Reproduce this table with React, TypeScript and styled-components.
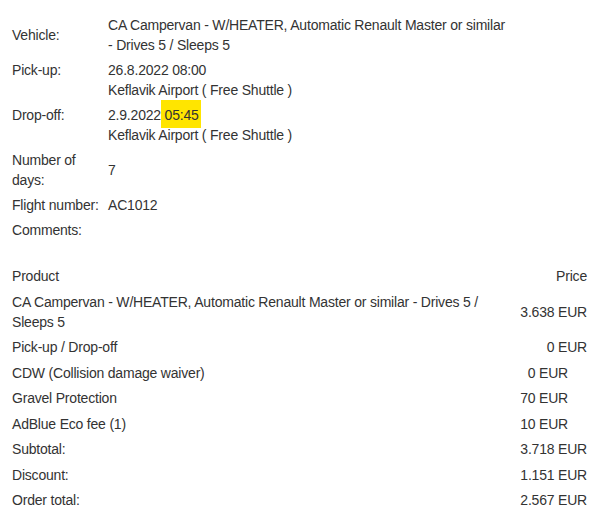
import React from "react";
import styled, { createGlobalStyle } from "styled-components";

const Global = createGlobalStyle`
  html, body { margin: 0; padding: 0; background: #fff; }
  body {
    font-family: Arial, "Liberation Sans", Helvetica, sans-serif;
    font-size: 14px;
    line-height: 20px;
    color: #333;
    letter-spacing: -0.2px;
  }
`;

const Page = styled.div`
  width: 575px;
  padding: 12px 23px 0 12px;
`;

const InfoList = styled.div`
  display: flex;
  flex-direction: column;
`;

const InfoRow = styled.div`
  display: grid;
  grid-template-columns: 90px 404px;
  column-gap: 6px;
  padding: 3px 0 2px;
`;

const Label = styled.div<{ $top?: boolean }>`
  align-self: ${(p) => (p.$top ? "start" : "center")};
`;

const Value = styled.div`
  align-self: center;
  min-height: 20px;
`;

const Highlight = styled.span`
  background: #ffe500;
  padding: 7px 2px 4.5px 0;
  white-space: pre;
`;

const ProductTable = styled.div`
  margin-top: 21px;
  display: flex;
  flex-direction: column;
`;

const ProductRow = styled.div`
  display: grid;
  grid-template-columns: 1fr 68px;
  column-gap: 10px;
  padding: 3px 0 2.5px;
`;

const ProductName = styled.div`
  align-self: center;
`;

const Price = styled.div<{ $inset?: boolean }>`
  align-self: center;
  text-align: right;
  white-space: nowrap;
  padding-right: ${(p) => (p.$inset ? "19px" : "0")};
`;

type Item = { name: string; price: string; inset?: boolean };

const items: Item[] = [
  {
    name: "CA Campervan - W/HEATER, Automatic Renault Master or similar - Drives 5 / Sleeps 5",
    price: "3.638 EUR",
  },
  { name: "Pick-up / Drop-off", price: "0 EUR" },
  { name: "CDW (Collision damage waiver)", price: "0 EUR", inset: true },
  { name: "Gravel Protection", price: "70 EUR", inset: true },
  { name: "AdBlue Eco fee (1)", price: "10 EUR", inset: true },
  { name: "Subtotal:", price: "3.718 EUR" },
  { name: "Discount:", price: "1.151 EUR" },
  { name: "Order total:", price: "2.567 EUR" },
];

export default function App() {
  return (
    <>
      <Global />
      <Page>
        <InfoList>
          <InfoRow>
            <Label>Vehicle:</Label>
            <Value>
              CA Campervan - W/HEATER, Automatic Renault Master or similar - Drives 5 / Sleeps 5
            </Value>
          </InfoRow>
          <InfoRow>
            <Label $top>Pick-up:</Label>
            <Value>
              <div>26.8.2022 08:00</div>
              <div>Keflavik Airport ( Free Shuttle )</div>
            </Value>
          </InfoRow>
          <InfoRow>
            <Label $top>Drop-off:</Label>
            <Value>
              <div>
                2.9.2022<Highlight> 05:45</Highlight>
              </div>
              <div>Keflavik Airport ( Free Shuttle )</div>
            </Value>
          </InfoRow>
          <InfoRow>
            <Label>Number of days:</Label>
            <Value>7</Value>
          </InfoRow>
          <InfoRow>
            <Label>Flight number:</Label>
            <Value>AC1012</Value>
          </InfoRow>
          <InfoRow>
            <Label>Comments:</Label>
            <Value></Value>
          </InfoRow>
        </InfoList>

        <ProductTable>
          <ProductRow>
            <ProductName>Product</ProductName>
            <Price>Price</Price>
          </ProductRow>
          {items.map((it) => (
            <ProductRow key={it.name}>
              <ProductName>{it.name}</ProductName>
              <Price $inset={it.inset}>{it.price}</Price>
            </ProductRow>
          ))}
        </ProductTable>
      </Page>
    </>
  );
}
